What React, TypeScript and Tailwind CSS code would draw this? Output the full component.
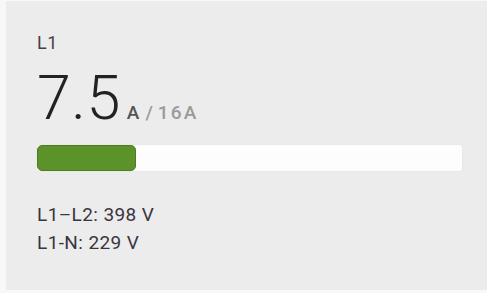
export default function App() {
  return (
    <div className="w-[487px] h-[293px] bg-[#f8f8f8] pl-[6px] pt-[1px] pb-[3px]" style={{ fontFamily: "Roboto, 'Liberation Sans', sans-serif" }}>
      <div className="h-full bg-[#ececec] pl-[31px] pr-[25px] pt-[33px] flex flex-col">
        <div className="text-[18px] leading-[18px] text-[#4a3f44] tracking-[0.5px]">L1</div>
        <div className="flex items-baseline mt-[17px] h-[59px]">
          <span className="text-[61px] leading-[59px] font-light text-[#222] tracking-[0.5px]">7.5</span>
          <span className="text-[19px] font-medium text-[#555] ml-[6px]">A</span>
          <span className="text-[19px] font-medium text-[#9a9a9a] ml-[6px]">/</span>
          <span className="text-[19px] font-medium text-[#9a9a9a] ml-[5px] tracking-[2.2px]">16A</span>
        </div>
        <div className="mt-[17px] h-[26px] bg-[#fdfdfd] rounded-[3px] shadow-[0_0_2px_rgba(0,0,0,0.06)]">
          <div className="h-full w-[99px] bg-[#5b9229] border border-[#4c7e20] rounded-[5px]" />
        </div>
        <div className="mt-[30px] text-[19px] leading-[28px] text-[#3a3540] tracking-[0.4px]">
          <div>L1–L2: 398 V</div>
          <div>L1-N: 229 V</div>
        </div>
      </div>
    </div>
  );
}
